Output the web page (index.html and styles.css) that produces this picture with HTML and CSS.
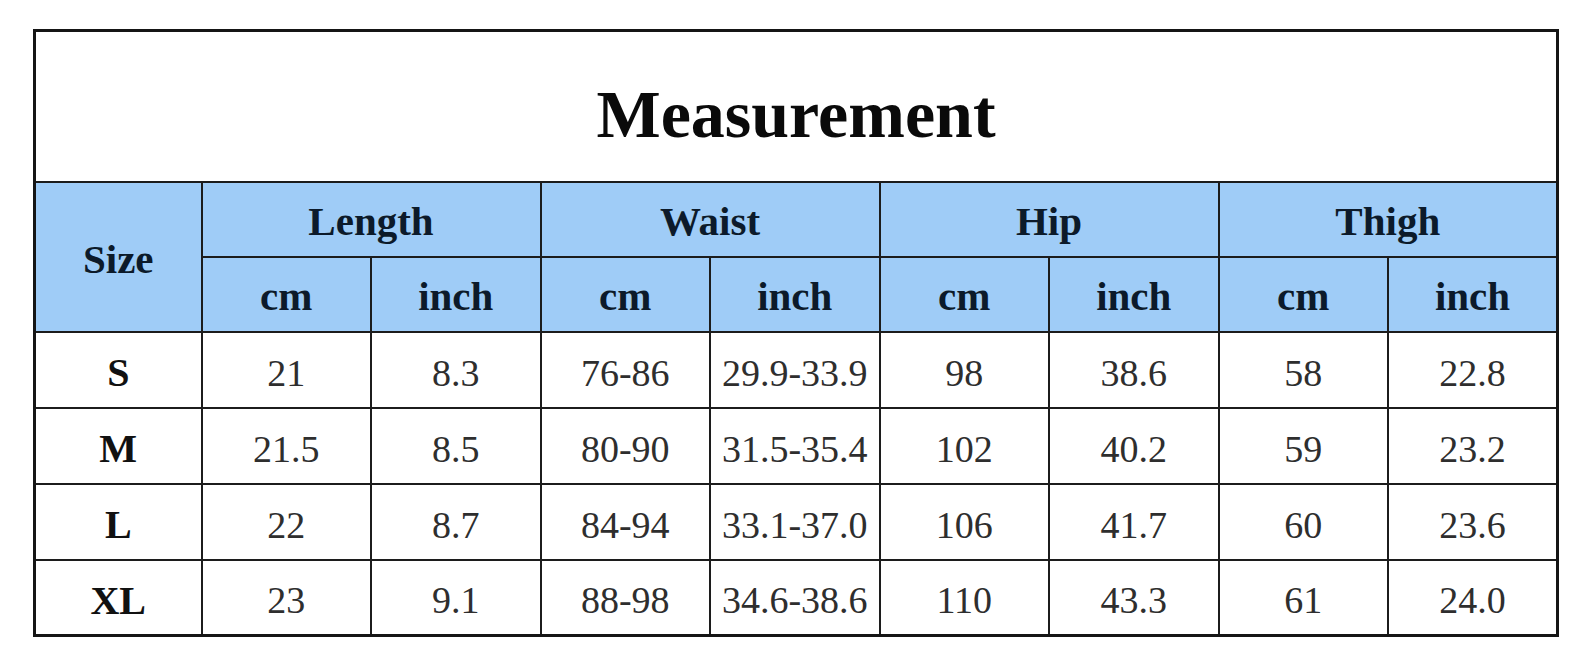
FILE: index.html
```html
<!DOCTYPE html>
<html lang="en">
<head>
<meta charset="utf-8">
<title>Measurement</title>
<link rel="stylesheet" href="styles.css">
</head>
<body>
<table class="chart">
  <colgroup>
    <col class="c-size">
    <col class="c"><col class="c"><col class="c"><col class="c">
    <col class="c"><col class="c"><col class="c"><col class="c">
  </colgroup>
  <tr class="title-row"><th colspan="9" class="title">Measurement</th></tr>
  <tr class="head-row">
    <th rowspan="2" class="head">Size</th>
    <th colspan="2" class="head">Length</th>
    <th colspan="2" class="head">Waist</th>
    <th colspan="2" class="head">Hip</th>
    <th colspan="2" class="head">Thigh</th>
  </tr>
  <tr class="head-row">
    <th class="head">cm</th><th class="head">inch</th>
    <th class="head">cm</th><th class="head">inch</th>
    <th class="head">cm</th><th class="head">inch</th>
    <th class="head">cm</th><th class="head">inch</th>
  </tr>
  <tr class="data-row">
    <th class="size">S</th>
    <td>21</td><td>8.3</td><td>76-86</td><td>29.9-33.9</td><td>98</td><td>38.6</td><td>58</td><td>22.8</td>
  </tr>
  <tr class="data-row">
    <th class="size">M</th>
    <td>21.5</td><td>8.5</td><td>80-90</td><td>31.5-35.4</td><td>102</td><td>40.2</td><td>59</td><td>23.2</td>
  </tr>
  <tr class="data-row">
    <th class="size">L</th>
    <td>22</td><td>8.7</td><td>84-94</td><td>33.1-37.0</td><td>106</td><td>41.7</td><td>60</td><td>23.6</td>
  </tr>
  <tr class="data-row">
    <th class="size">XL</th>
    <td>23</td><td>9.1</td><td>88-98</td><td>34.6-38.6</td><td>110</td><td>43.3</td><td>61</td><td>24.0</td>
  </tr>
</table>
</body>
</html>
```
FILE: styles.css
```css
html, body {
  margin: 0;
  padding: 0;
  background: #ffffff;
}

body {
  padding: 29px 0 0 33px;
  font-family: "Liberation Serif", "Times New Roman", serif;
}

.chart {
  border-collapse: collapse;
  table-layout: fixed;
  width: 1526px;
  border: 3px solid #151515;
}

.c-size { width: 167px; }
.c { width: 169.5px; }

.chart th,
.chart td {
  border: 2px solid #1c1c1c;
  padding: 0;
  text-align: center;
  vertical-align: middle;
}

.title-row { height: 151px; }
.head-row { height: 75px; }
.data-row { height: 76px; }

.chart .title {
  background: #ffffff;
  font-size: 68px;
  line-height: 76px;
  font-weight: bold;
  color: #0a0a0a;
  vertical-align: bottom;
  padding-bottom: 29px;
}

.chart .head {
  background: #9fccf7;
  font-size: 41px;
  font-weight: bold;
  color: #0c1a2a;
  padding-top: 4px;
}

.chart .size {
  background: #ffffff;
  font-size: 40px;
  font-weight: bold;
  color: #111111;
  padding-top: 6px;
}

.chart td {
  background: #ffffff;
  font-size: 38px;
  color: #2e2e2e;
  padding-top: 6px;
}
```
